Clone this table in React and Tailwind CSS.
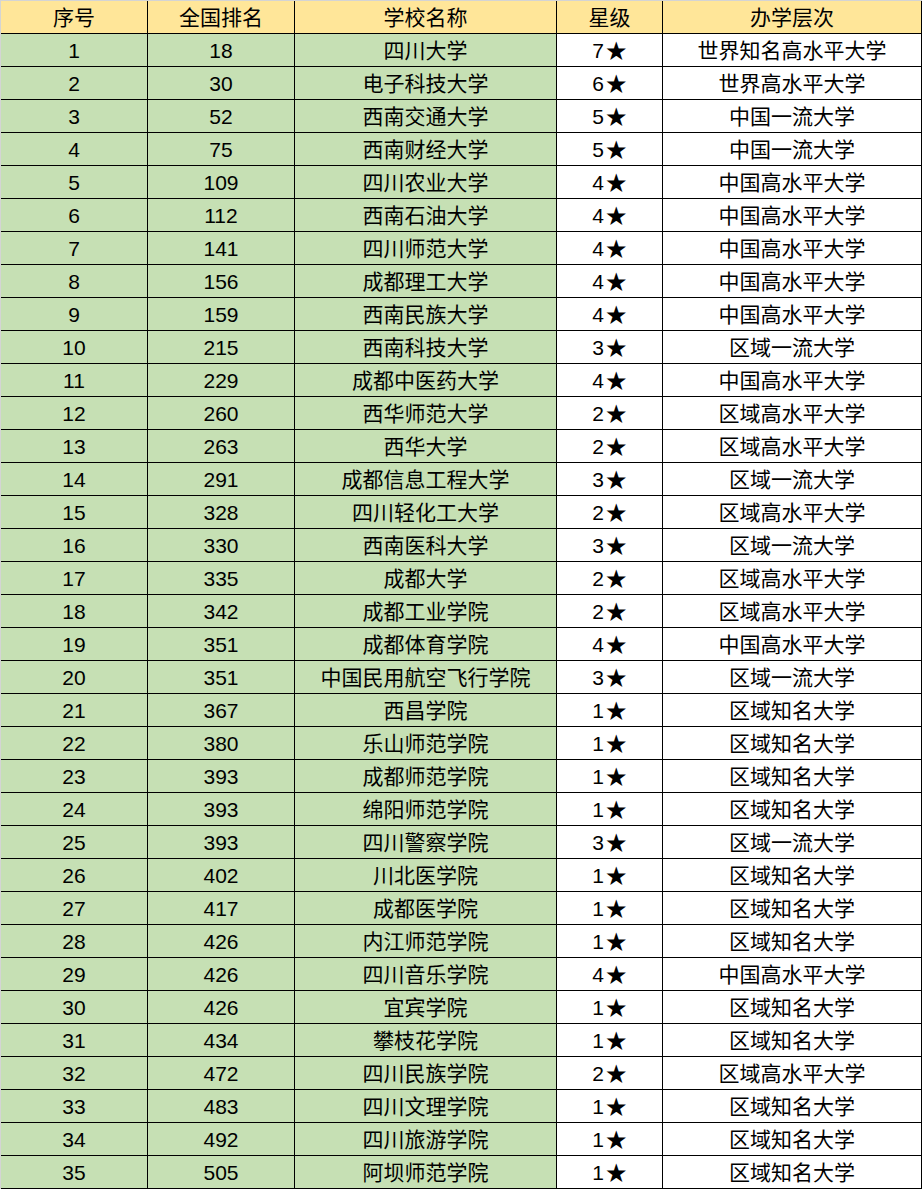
const rows = [
  [1, 18, "四川大学", 7, "世界知名高水平大学"],
  [2, 30, "电子科技大学", 6, "世界高水平大学"],
  [3, 52, "西南交通大学", 5, "中国一流大学"],
  [4, 75, "西南财经大学", 5, "中国一流大学"],
  [5, 109, "四川农业大学", 4, "中国高水平大学"],
  [6, 112, "西南石油大学", 4, "中国高水平大学"],
  [7, 141, "四川师范大学", 4, "中国高水平大学"],
  [8, 156, "成都理工大学", 4, "中国高水平大学"],
  [9, 159, "西南民族大学", 4, "中国高水平大学"],
  [10, 215, "西南科技大学", 3, "区域一流大学"],
  [11, 229, "成都中医药大学", 4, "中国高水平大学"],
  [12, 260, "西华师范大学", 2, "区域高水平大学"],
  [13, 263, "西华大学", 2, "区域高水平大学"],
  [14, 291, "成都信息工程大学", 3, "区域一流大学"],
  [15, 328, "四川轻化工大学", 2, "区域高水平大学"],
  [16, 330, "西南医科大学", 3, "区域一流大学"],
  [17, 335, "成都大学", 2, "区域高水平大学"],
  [18, 342, "成都工业学院", 2, "区域高水平大学"],
  [19, 351, "成都体育学院", 4, "中国高水平大学"],
  [20, 351, "中国民用航空飞行学院", 3, "区域一流大学"],
  [21, 367, "西昌学院", 1, "区域知名大学"],
  [22, 380, "乐山师范学院", 1, "区域知名大学"],
  [23, 393, "成都师范学院", 1, "区域知名大学"],
  [24, 393, "绵阳师范学院", 1, "区域知名大学"],
  [25, 393, "四川警察学院", 3, "区域一流大学"],
  [26, 402, "川北医学院", 1, "区域知名大学"],
  [27, 417, "成都医学院", 1, "区域知名大学"],
  [28, 426, "内江师范学院", 1, "区域知名大学"],
  [29, 426, "四川音乐学院", 4, "中国高水平大学"],
  [30, 426, "宜宾学院", 1, "区域知名大学"],
  [31, 434, "攀枝花学院", 1, "区域知名大学"],
  [32, 472, "四川民族学院", 2, "区域高水平大学"],
  [33, 483, "四川文理学院", 1, "区域知名大学"],
  [34, 492, "四川旅游学院", 1, "区域知名大学"],
  [35, 505, "阿坝师范学院", 1, "区域知名大学"],
];

const headers = ["序号", "全国排名", "学校名称", "星级", "办学层次"];
const widths = ["w-[147px]", "w-[147px]", "w-[262px]", "w-[106px]", "w-[259px]"];

function Cell({ w, bg, children }) {
  return (
    <div
      className={`${w} ${bg} h-[33px] shrink-0 border-r border-b border-black flex items-center justify-center text-[21px] leading-none text-black`}
    >
      {children}
    </div>
  );
}

export default function App() {
  return (
    <div
      className="w-[922px] bg-white border-l border-t border-[#d4d4d4]"
      style={{ fontFamily: '"Liberation Sans", "Noto Sans CJK SC", sans-serif' }}
    >
      <div className="flex">
        {headers.map((h, i) => (
          <Cell key={h} w={widths[i]} bg="bg-[#ffe699]">
            {h}
          </Cell>
        ))}
      </div>
      {rows.map((r) => (
        <div key={r[0]} className="flex">
          <Cell w={widths[0]} bg="bg-[#c6e0b4]">{r[0]}</Cell>
          <Cell w={widths[1]} bg="bg-[#c6e0b4]">{r[1]}</Cell>
          <Cell w={widths[2]} bg="bg-[#c6e0b4]">{r[2]}</Cell>
          <Cell w={widths[3]} bg="bg-white">
            {r[3]}
            <span className="ml-[2px]">★</span>
          </Cell>
          <Cell w={widths[4]} bg="bg-white">{r[4]}</Cell>
        </div>
      ))}
    </div>
  );
}
